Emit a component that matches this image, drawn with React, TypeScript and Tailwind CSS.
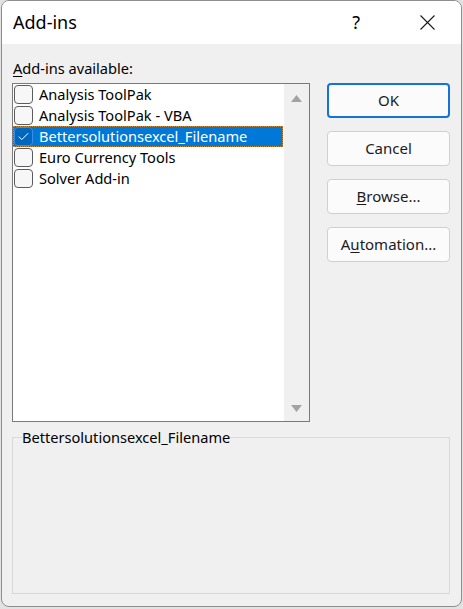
const font = { fontFamily: '"Noto Sans", "Open Sans", Arial, sans-serif' }

const items = [
  { label: "Analysis ToolPak", checked: false },
  { label: "Analysis ToolPak - VBA", checked: false },
  { label: "Bettersolutionsexcel_Filename", checked: true },
  { label: "Euro Currency Tools", checked: false },
  { label: "Solver Add-in", checked: false },
]

function Checkbox({ checked }: { checked: boolean }) {
  if (checked) {
    return (
      <div className="ml-[1px] flex h-[19px] w-[19px] shrink-0 items-center justify-center rounded-[4px] border border-[#3d8ee0] bg-[#0067c0]">
        <svg width="11" height="9" viewBox="0 0 11 9" fill="none">
          <path d="M0.8 4.6 L3.8 7.6 L10.2 1.2" stroke="white" strokeWidth="1" />
        </svg>
      </div>
    )
  }
  return <div className="ml-[1px] h-[19px] w-[19px] shrink-0 rounded-[4px] border border-[#5c5c5c] bg-[#f7f7f7]" />
}

function Button({ children, primary = false }: { children: React.ReactNode; primary?: boolean }) {
  return (
    <div
      className={
        primary
          ? "flex h-[35px] items-center justify-center rounded-[4px] border-2 border-[#1473d6] bg-[#fbfbfb] text-[15px] text-[#1b1b1b]"
          : "flex h-[35px] items-center justify-center rounded-[4px] border border-[#d0d0d0] bg-[#fbfbfb] text-[15px] text-[#1b1b1b]"
      }
    >
      {children}
    </div>
  )
}

export default function App() {
  return (
    <div className="h-[609px] w-[463px] bg-[#e2e2e2] pl-[1px]" style={font}>
      <div className="flex h-[607px] w-[461px] flex-col overflow-hidden rounded-[8px] border border-[#8e8e8e] bg-[#f0f0f0]">
        {/* title bar */}
        <div className="flex h-[43px] shrink-0 items-center bg-white pl-[11px] pr-[26px] text-[18px] text-black">
          <span>Add-ins</span>
          <span className="ml-auto">?</span>
          <svg className="ml-[60px]" width="15" height="15" viewBox="0 0 15 15">
            <path d="M0.5 0.5 L14.5 14.5 M14.5 0.5 L0.5 14.5" stroke="#1a1a1a" strokeWidth="1.1" />
          </svg>
        </div>

        {/* body */}
        <div className="px-[10px] pt-[14px] text-[14.6px] text-black">
          <div className="mb-[5px] h-[20px] pl-[1px] leading-[20px]">
            <span className="underline underline-offset-2">A</span>dd-ins available:
          </div>

          <div className="flex gap-[17px]">
            <div className="flex h-[339px] w-[298px] border border-[#7a7a7a] bg-white">
              <div className="flex-1 pr-[1px]">
                {items.map((item, i) =>
                  i === 2 ? (
                    <div
                      key={item.label}
                      className="flex h-[21px] items-center border border-dotted border-[#c9873b] bg-[#0078d7] text-white"
                    >
                      <div className="-ml-[1px]">
                        <Checkbox checked />
                      </div>
                      <span className="ml-[6px] leading-[19px]">{item.label}</span>
                    </div>
                  ) : (
                    <div key={item.label} className="flex h-[21px] items-center">
                      <Checkbox checked={item.checked} />
                      <span className="ml-[6px] leading-[21px]">{item.label}</span>
                    </div>
                  )
                )}
              </div>
              <div className="flex w-[25px] flex-col items-center justify-between bg-[#f0f0f0] pb-[9px] pt-[11px]">
                <svg width="11" height="7" viewBox="0 0 11 7">
                  <path d="M5.5 0 L11 7 L0 7 Z" fill="#a3a3a3" />
                </svg>
                <svg width="11" height="7" viewBox="0 0 11 7">
                  <path d="M0 0 L11 0 L5.5 7 Z" fill="#a3a3a3" />
                </svg>
              </div>
            </div>

            <div className="flex w-[123px] flex-col gap-[13px]">
              <Button primary>OK</Button>
              <Button>Cancel</Button>
              <Button>
                <span>
                  <span className="underline underline-offset-2">B</span>rowse...
                </span>
              </Button>
              <Button>
                <span>
                  A<span className="underline underline-offset-2">u</span>tomation...
                </span>
              </Button>
            </div>
          </div>

          <fieldset className="mt-[6px] h-[166px] w-[438px] border border-[#d9d9d9] pl-[9px]">
            <legend className="px-0 leading-[18px]">Bettersolutionsexcel_Filename</legend>
          </fieldset>
        </div>
      </div>
    </div>
  )
}
